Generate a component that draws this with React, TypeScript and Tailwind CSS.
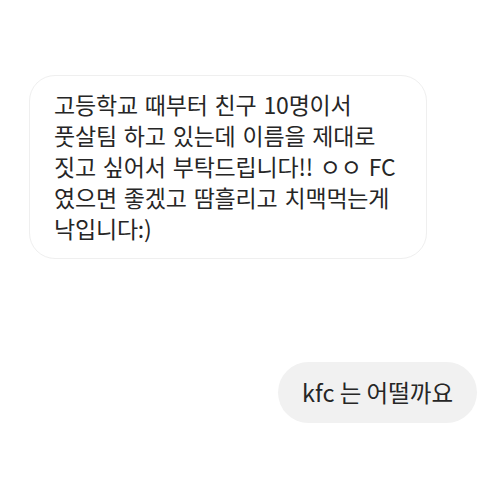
export default function App() {
  const lines = [
    "고등학교 때부터 친구 10명이서",
    "풋살팀 하고 있는데 이름을 제대로",
    "짓고 싶어서 부탁드립니다!! ㅇㅇ FC",
    "였으면 좋겠고 땀흘리고 치맥먹는게",
    "낙입니다:)",
  ];

  return (
    <div
      className="w-[500px] h-[500px] bg-white flex flex-col text-[#262626]"
      style={{ fontFamily: '"Noto Sans CJK KR", "Noto Sans", sans-serif' }}
    >
      <div className="ml-[29px] mt-[75px] w-[398px] h-[184px] rounded-[26px] border border-[#efefef] pl-[24px] pt-[13px]">
        {lines.map((line) => (
          <div key={line} className="text-[23px] leading-[31px] whitespace-nowrap tracking-[-0.2px] [word-spacing:2px]">
            {line}
          </div>
        ))}
      </div>

      <div className="mt-[103px] mr-[23px] self-end h-[61px] rounded-full bg-[#f1f1f1] px-[24px] flex items-center">
        <span className="text-[23.5px] leading-[31px]">kfc 는 어떨까요</span>
      </div>
    </div>
  );
}
